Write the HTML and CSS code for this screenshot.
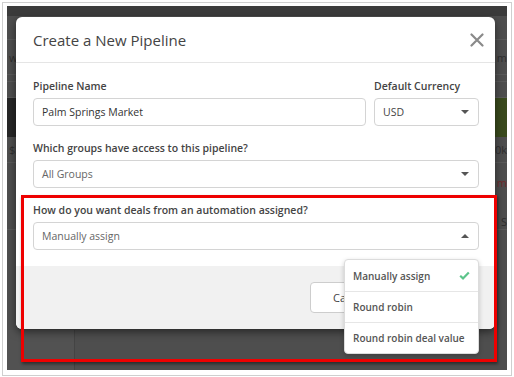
FILE: index.html
```html
<!DOCTYPE html>
<html lang="en">
<head>
  <meta charset="UTF-8" />
  <title>Create a New Pipeline</title>
  <link rel="stylesheet" href="styles.css">
</head>
<body>
  <div class="shot">
    <div class="screen">
      <!-- dimmed page behind the modal -->
      <div class="bg-page">
        <div class="bg-topbar"></div>
        <div class="bg-row h24"></div>
        <div class="bg-row h35"><span>wn</span><span>m</span></div>
        <div class="bg-row h7"></div>
        <div class="bg-row h16"></div>
        <div class="bg-row bg-head"><span class="bg-black"></span><span class="bg-green"></span></div>
        <div class="bg-row h26"><span>$3</span><span>00k</span></div>
        <div class="bg-row h67 bg-stack"><span class="bg-red">m</span><span>S</span></div>
        <div class="bg-row bg-last"><span class="bg-cell"></span></div>
      </div>

      <div class="modal">
        <div class="modal-header">
          <h2>Create a New Pipeline</h2>
          <svg class="close" width="14" height="14" viewBox="0 0 14 14">
            <path d="M1.5 1.5 L12.5 12.5 M12.5 1.5 L1.5 12.5" stroke="#8a8a8a" stroke-width="2.2" stroke-linecap="round" />
          </svg>
        </div>

        <div class="modal-body">
          <div class="row">
            <div class="field grow">
              <label>Pipeline Name</label>
              <div class="input">Palm Springs Market</div>
            </div>
            <div class="field currency">
              <label>Default Currency</label>
              <div class="input select">USD <span class="caret"></span></div>
            </div>
          </div>

          <div class="field">
            <label>Which groups have access to this pipeline?</label>
            <div class="input select">All Groups <span class="caret"></span></div>
          </div>

          <div class="field">
            <label>How do you want deals from an automation assigned?</label>
            <div class="input select">Manually assign <span class="caret up"></span></div>
          </div>
        </div>

        <div class="modal-footer">
          <button class="btn">Cancel</button>
          <button class="btn primary">Create</button>
        </div>

        <ul class="menu">
          <li>Manually assign
            <svg width="11" height="9" viewBox="0 0 11 9">
              <path d="M1.2 4.8 L4 7.4 L9.8 1.4" fill="none" stroke="#5cc48a" stroke-width="2.2" />
            </svg>
          </li>
          <li>Round robin</li>
          <li>Round robin deal value</li>
        </ul>
      </div>

      <div class="highlight"></div>
    </div>
  </div>
</body>
</html>
```

FILE: styles.css
```css
* {
  box-sizing: border-box;
}

body {
  margin: 0;
  background: #ffffff;
  font-family: 'Open Sans', 'Liberation Sans', sans-serif;
}

.shot {
  margin: 2px;
  width: 510px;
  height: 374px;
  border: 1px solid #cfcfcf;
  padding: 3px 3px 4px 4px;
}

.screen {
  position: relative;
  width: 500px;
  height: 364px;
  overflow: hidden;
  background: #4e4e4e;
}

/* background page */
.bg-page {
  display: flex;
  flex-direction: column;
  height: 100%;
  font-size: 11px;
  color: #2e2e2e;
}

.bg-topbar {
  height: 10px;
  background: #3b3b3b;
}

.bg-row {
  display: flex;
  justify-content: space-between;
  align-items: center;
  border-bottom: 1px solid #5a5a5a;
  padding: 0 0 0 2px;
}

.h24 { height: 24px; }
.h35 { height: 35px; }
.h7 { height: 7px; }
.h16 { height: 16px; }
.h26 { height: 26px; }
.h67 { height: 67px; }

.bg-stack {
  align-items: flex-end;
  flex-direction: column;
  padding-top: 12px;
  gap: 4px;
}

.bg-red {
  color: #6e2b2b;
}

.bg-head {
  height: 39px;
  padding: 0;
  border: none;
}

.bg-black {
  width: 50%;
  height: 100%;
  background: #262626;
}

.bg-green {
  width: 50%;
  height: 100%;
  background: #3a4a1d;
}

.bg-last {
  flex: 1;
  align-items: flex-end;
  border: none;
  padding: 0;
}

.bg-cell {
  width: 68px;
  height: 40px;
  border-right: 1px solid #444;
  background: #525252;
}

/* modal */
.modal {
  position: absolute;
  left: 9px;
  top: 11px;
  width: 479px;
  background: #ffffff;
  border-radius: 6px;
  box-shadow: 0 3px 9px rgba(0, 0, 0, 0.5);
}

.modal-header {
  display: flex;
  justify-content: space-between;
  align-items: center;
  height: 46px;
  padding: 0 11px 0 17px;
  border-bottom: 1px solid #e5e5e5;
}

.modal-header h2 {
  margin: 0;
  font-size: 15px;
  font-weight: 400;
  color: #444;
}

.modal-body {
  padding: 15px 16px 16px 17px;
  display: flex;
  flex-direction: column;
  gap: 14px;
}

.row {
  display: flex;
  gap: 8px;
}

.grow {
  flex: 1;
}

.currency {
  width: 105px;
}

.field label {
  display: block;
  font-size: 10.5px;
  font-weight: 600;
  color: #444;
  line-height: 16px;
  margin-bottom: 4px;
}

.input {
  height: 28px;
  border: 1px solid #d4d4d4;
  border-radius: 4px;
  padding: 0 8px;
  font-size: 10.5px;
  color: #333;
  display: flex;
  align-items: center;
}

.select {
  justify-content: space-between;
  color: #666;
}

.currency .select {
  color: #444;
}

.caret {
  width: 0;
  height: 0;
  border-left: 4px solid transparent;
  border-right: 4px solid transparent;
  border-top: 4px solid #555;
  margin-right: 1px;
}

.caret.up {
  border-top: none;
  border-bottom: 4px solid #555;
}

.modal-footer {
  display: flex;
  justify-content: flex-end;
  gap: 8px;
  height: 63px;
  padding: 16px;
  background: #f1f1f1;
  border-radius: 0 0 6px 6px;
}

.btn {
  width: 82px;
  font-family: inherit;
  font-size: 11px;
  color: #444;
  background: #fff;
  border: 1px solid #cdcdcd;
  border-radius: 4px;
  padding: 0 0 0 22px;
  text-align: left;
}

.btn.primary {
  width: 79px;
  background: #3d8fd6;
  border-color: #3d8fd6;
  color: #fff;
}

/* open dropdown */
.menu {
  position: absolute;
  left: 328px;
  top: 242px;
  width: 135px;
  margin: 0;
  padding: 0;
  list-style: none;
  background: #fff;
  border: 1px solid #dcdcdc;
  border-radius: 4px;
  box-shadow: 0 2px 5px rgba(0, 0, 0, 0.2);
}

.menu li {
  display: flex;
  justify-content: space-between;
  align-items: center;
  height: 31px;
  padding: 0 8px;
  font-size: 10px;
  font-weight: 600;
  white-space: nowrap;
  color: #555;
  border-top: 1px solid #e6e6e6;
}

.menu li:first-child {
  border-top: none;
}

/* annotation */
.highlight {
  position: absolute;
  left: 14px;
  top: 189px;
  width: 476px;
  height: 167px;
  border: 3px solid #ee0000;
  box-shadow: 1px 2px 3px rgba(0, 0, 0, 0.45);
}
```
